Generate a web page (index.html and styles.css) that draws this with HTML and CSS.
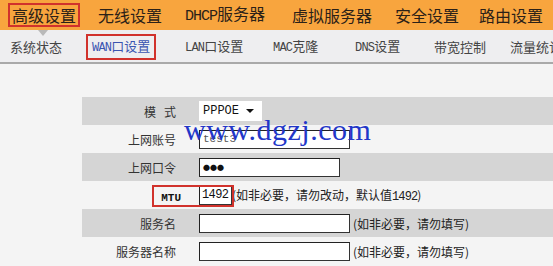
FILE: index.html
```html
<!DOCTYPE html>
<html lang="zh-CN">
<head>
    <meta charset="UTF-8">
    <title>WAN口设置</title>
    <link rel="stylesheet" href="styles.css">
</head>
<body>
    <!-- 一级菜单 -->
    <div class="topnav">
        <span class="nav-item active">高级设置</span>
        <span class="nav-item">无线设置</span>
        <span class="nav-item"><span class="latin">DHCP</span>服务器</span>
        <span class="nav-item">虚拟服务器</span>
        <span class="nav-item">安全设置</span>
        <span class="nav-item">路由设置</span>
    </div>

    <!-- 二级菜单 -->
    <div class="subnav">
        <span class="sub-item">系统状态</span>
        <span class="sub-item active"><span class="latin">WAN</span>口设置</span>
        <span class="sub-item"><span class="latin">LAN</span>口设置</span>
        <span class="sub-item"><span class="latin">MAC</span>克隆</span>
        <span class="sub-item"><span class="latin">DNS</span>设置</span>
        <span class="sub-item">带宽控制</span>
        <span class="sub-item">流量统计</span>
    </div>

    <div class="form">
        <div class="row">
            <div class="label"><span class="spaced">模式</span></div>
            <div class="field">
                <div class="select"><span class="latin">PPPOE</span><span class="arrow"></span></div>
            </div>
        </div>
        <div class="row">
            <div class="label">上网账号</div>
            <div class="field"><div class="input w-long"><span class="latin small">test3</span></div></div>
        </div>
        <div class="row">
            <div class="label">上网口令</div>
            <div class="field"><div class="input w-pass"><span class="dots">●●●</span></div></div>
        </div>
        <div class="row mtu">
            <div class="label"><span class="latin bold">MTU</span></div>
            <div class="field">
                <div class="input w-short"><span class="latin">1492</span></div>
                <span class="hint">(如非必要，请勿改动，默认值<span class="latin">1492</span>)</span>
            </div>
        </div>
        <div class="row">
            <div class="label">服务名</div>
            <div class="field">
                <div class="input w-long"></div>
                <span class="hint gap">(如非必要，请勿填写)</span>
            </div>
        </div>
        <div class="row">
            <div class="label">服务器名称</div>
            <div class="field">
                <div class="input w-long"></div>
                <span class="hint gap">(如非必要，请勿填写)</span>
            </div>
        </div>

        <!-- 水印 -->
        <div class="watermark">www.dgzj.com</div>
    </div>
</body>
</html>
```

FILE: styles.css
```css
:root {
    --orange: #F8A53E;
    --sub-bg: #EEEEF0;
    --row-grey: #D5D5D5;
    --page-bg: #F4F4F4;
    --red: #D1322C;
    --text: #333;
}

body {
    margin: 0;
    background: var(--page-bg);
    color: var(--text);
    font-family: "Noto Sans CJK SC", sans-serif;
    overflow: hidden;
}

.latin {
    font-family: "Liberation Mono", "Noto Sans CJK SC", monospace;
}

/* 一级菜单 */
.topnav {
    height: 30px;
    background: var(--orange);
    display: grid;
    grid-template-columns: 84px 87px 107px 103px 84px auto;
    align-items: center;
    padding-left: 8px;
    position: relative;
}

.nav-item {
    font-size: 16px;
    line-height: 20px;
    color: #2b2118;
    padding: 0 2px 0 6px;
    white-space: nowrap;
}

.nav-item .latin {
    font-size: 15px;
    letter-spacing: -1px;
}

.nav-item.active {
    justify-self: start;
    border: 2px solid var(--red);
    padding: 0 2px;
}

.topnav::after {
    content: "";
    position: absolute;
    left: 38px;
    bottom: -6px;
    border-left: 5px solid transparent;
    border-right: 5px solid transparent;
    border-top: 6px solid #B9B9B9;
}

/* 二级菜单 */
.subnav {
    height: 34px;
    background: var(--sub-bg);
    border-bottom: 2px solid #A9A9A9;
    display: grid;
    grid-template-columns: 83px 92px 88px 82px 79px 76px auto;
    align-items: center;
    padding-left: 10px;
    padding-top: 1px;
    box-sizing: border-box;
}

.sub-item {
    font-size: 13px;
    line-height: 17px;
    color: #444;
    white-space: nowrap;
}

.sub-item .latin {
    font-size: 12px;
    letter-spacing: -0.8px;
}

.sub-item.active {
    justify-self: start;
    margin-left: -7px;
    border: 2px solid var(--red);
    padding: 1px 4px;
    color: #3B55B0;
}

/* 表单 */
.form {
    margin: 33px 0 0 82px;
    position: relative;
}

.row {
    height: 28px;
    display: flex;
    align-items: center;
    position: relative;
    font-size: 12px;
}

.row:nth-child(odd) {
    background: var(--row-grey);
}

.label {
    width: 94px;
    padding-right: 23px;
    text-align: right;
    color: #333;
}

.spaced {
    letter-spacing: 8px;
    margin-right: -8px;
}

.field {
    display: flex;
    align-items: center;
}

.select {
    width: 63px;
    height: 20px;
    background: #fff;
    display: flex;
    align-items: center;
    justify-content: space-between;
    padding: 0 8px 0 4px;
    box-sizing: border-box;
    font-size: 12px;
    color: #111;
}

.arrow {
    border-left: 4px solid transparent;
    border-right: 4px solid transparent;
    border-top: 4px solid #111;
}

.input {
    height: 19px;
    background: #fff;
    border: 1px solid #333;
    border-top-color: #222;
    border-left-color: #222;
    box-sizing: border-box;
    display: flex;
    align-items: center;
    padding-left: 3px;
    font-size: 12px;
    color: #111;
}

.w-long { width: 151px; }
.w-pass { width: 141px; }
.w-short { width: 33px; padding-left: 2px; letter-spacing: -0.6px; }

.small { font-size: 11px; color: #555; }

.dots {
    font-size: 7px;
    letter-spacing: 0;
    color: #111;
}

.bold { font-weight: bold; font-size: 11px; color: #111; }

.hint {
    font-size: 12px;
    color: #222;
    white-space: nowrap;
}

.hint .latin { font-size: 12px; letter-spacing: -0.9px; }

.hint.gap { margin-left: 3px; }

.mtu .label { padding-right: 18px; width: 99px; }

.mtu::after {
    content: "";
    position: absolute;
    left: 70px;
    top: 4px;
    width: 82px;
    height: 22px;
    border: 2px solid var(--red);
    box-sizing: border-box;
}

.watermark {
    position: absolute;
    left: 102px;
    top: 18px;
    font-family: "Liberation Serif", serif;
    font-size: 30px;
    line-height: 30px;
    color: #2236C8;
    letter-spacing: 0.5px;
}
```
